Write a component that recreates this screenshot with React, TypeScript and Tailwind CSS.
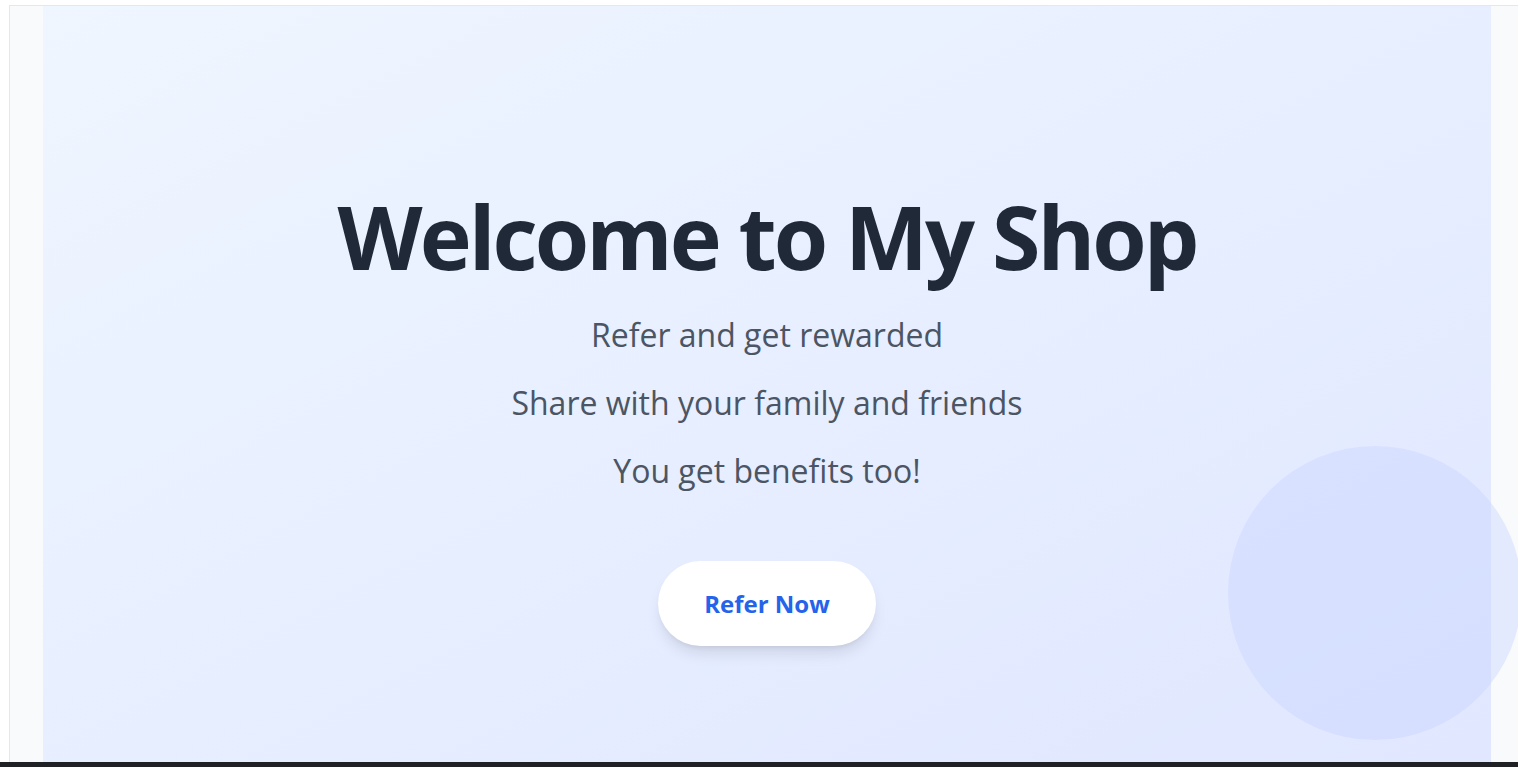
export default function App() {
  return (
    <div className="h-[767px] w-full overflow-hidden bg-white flex flex-col" style={{ fontFamily: '"Open Sans", "Noto Sans", sans-serif' }}>
      <div className="relative flex-1 ml-[9px] mt-[5px] flex border-l border-t border-gray-200 bg-slate-50 overflow-hidden">
        <div className="ml-[33px] mr-[27px] flex-1 bg-gradient-to-br from-blue-50 to-indigo-100 flex flex-col items-center pt-[186px]">
          <h1 className="text-[88px] leading-none font-bold text-[#1f2937] tracking-[-3px]">Welcome to My Shop</h1>
          <div className="mt-[35px] flex flex-col items-center gap-[28px] text-[32px] leading-[40px] text-[#4b5563]">
            <p>Refer and get rewarded</p>
            <p>Share with your family and friends</p>
            <p>You get benefits too!</p>
          </div>
          <button className="mt-[70px] rounded-full bg-white px-[46px] py-[25px] text-[24px] leading-[35px] font-bold text-[#2563eb] shadow-lg">
            Refer Now
          </button>
        </div>
        <div className="absolute left-[1218px] top-[440px] h-[294px] w-[294px] rounded-full bg-indigo-200/40" />
      </div>
      <div className="h-[5px] bg-[#202124]" />
    </div>
  )
}
